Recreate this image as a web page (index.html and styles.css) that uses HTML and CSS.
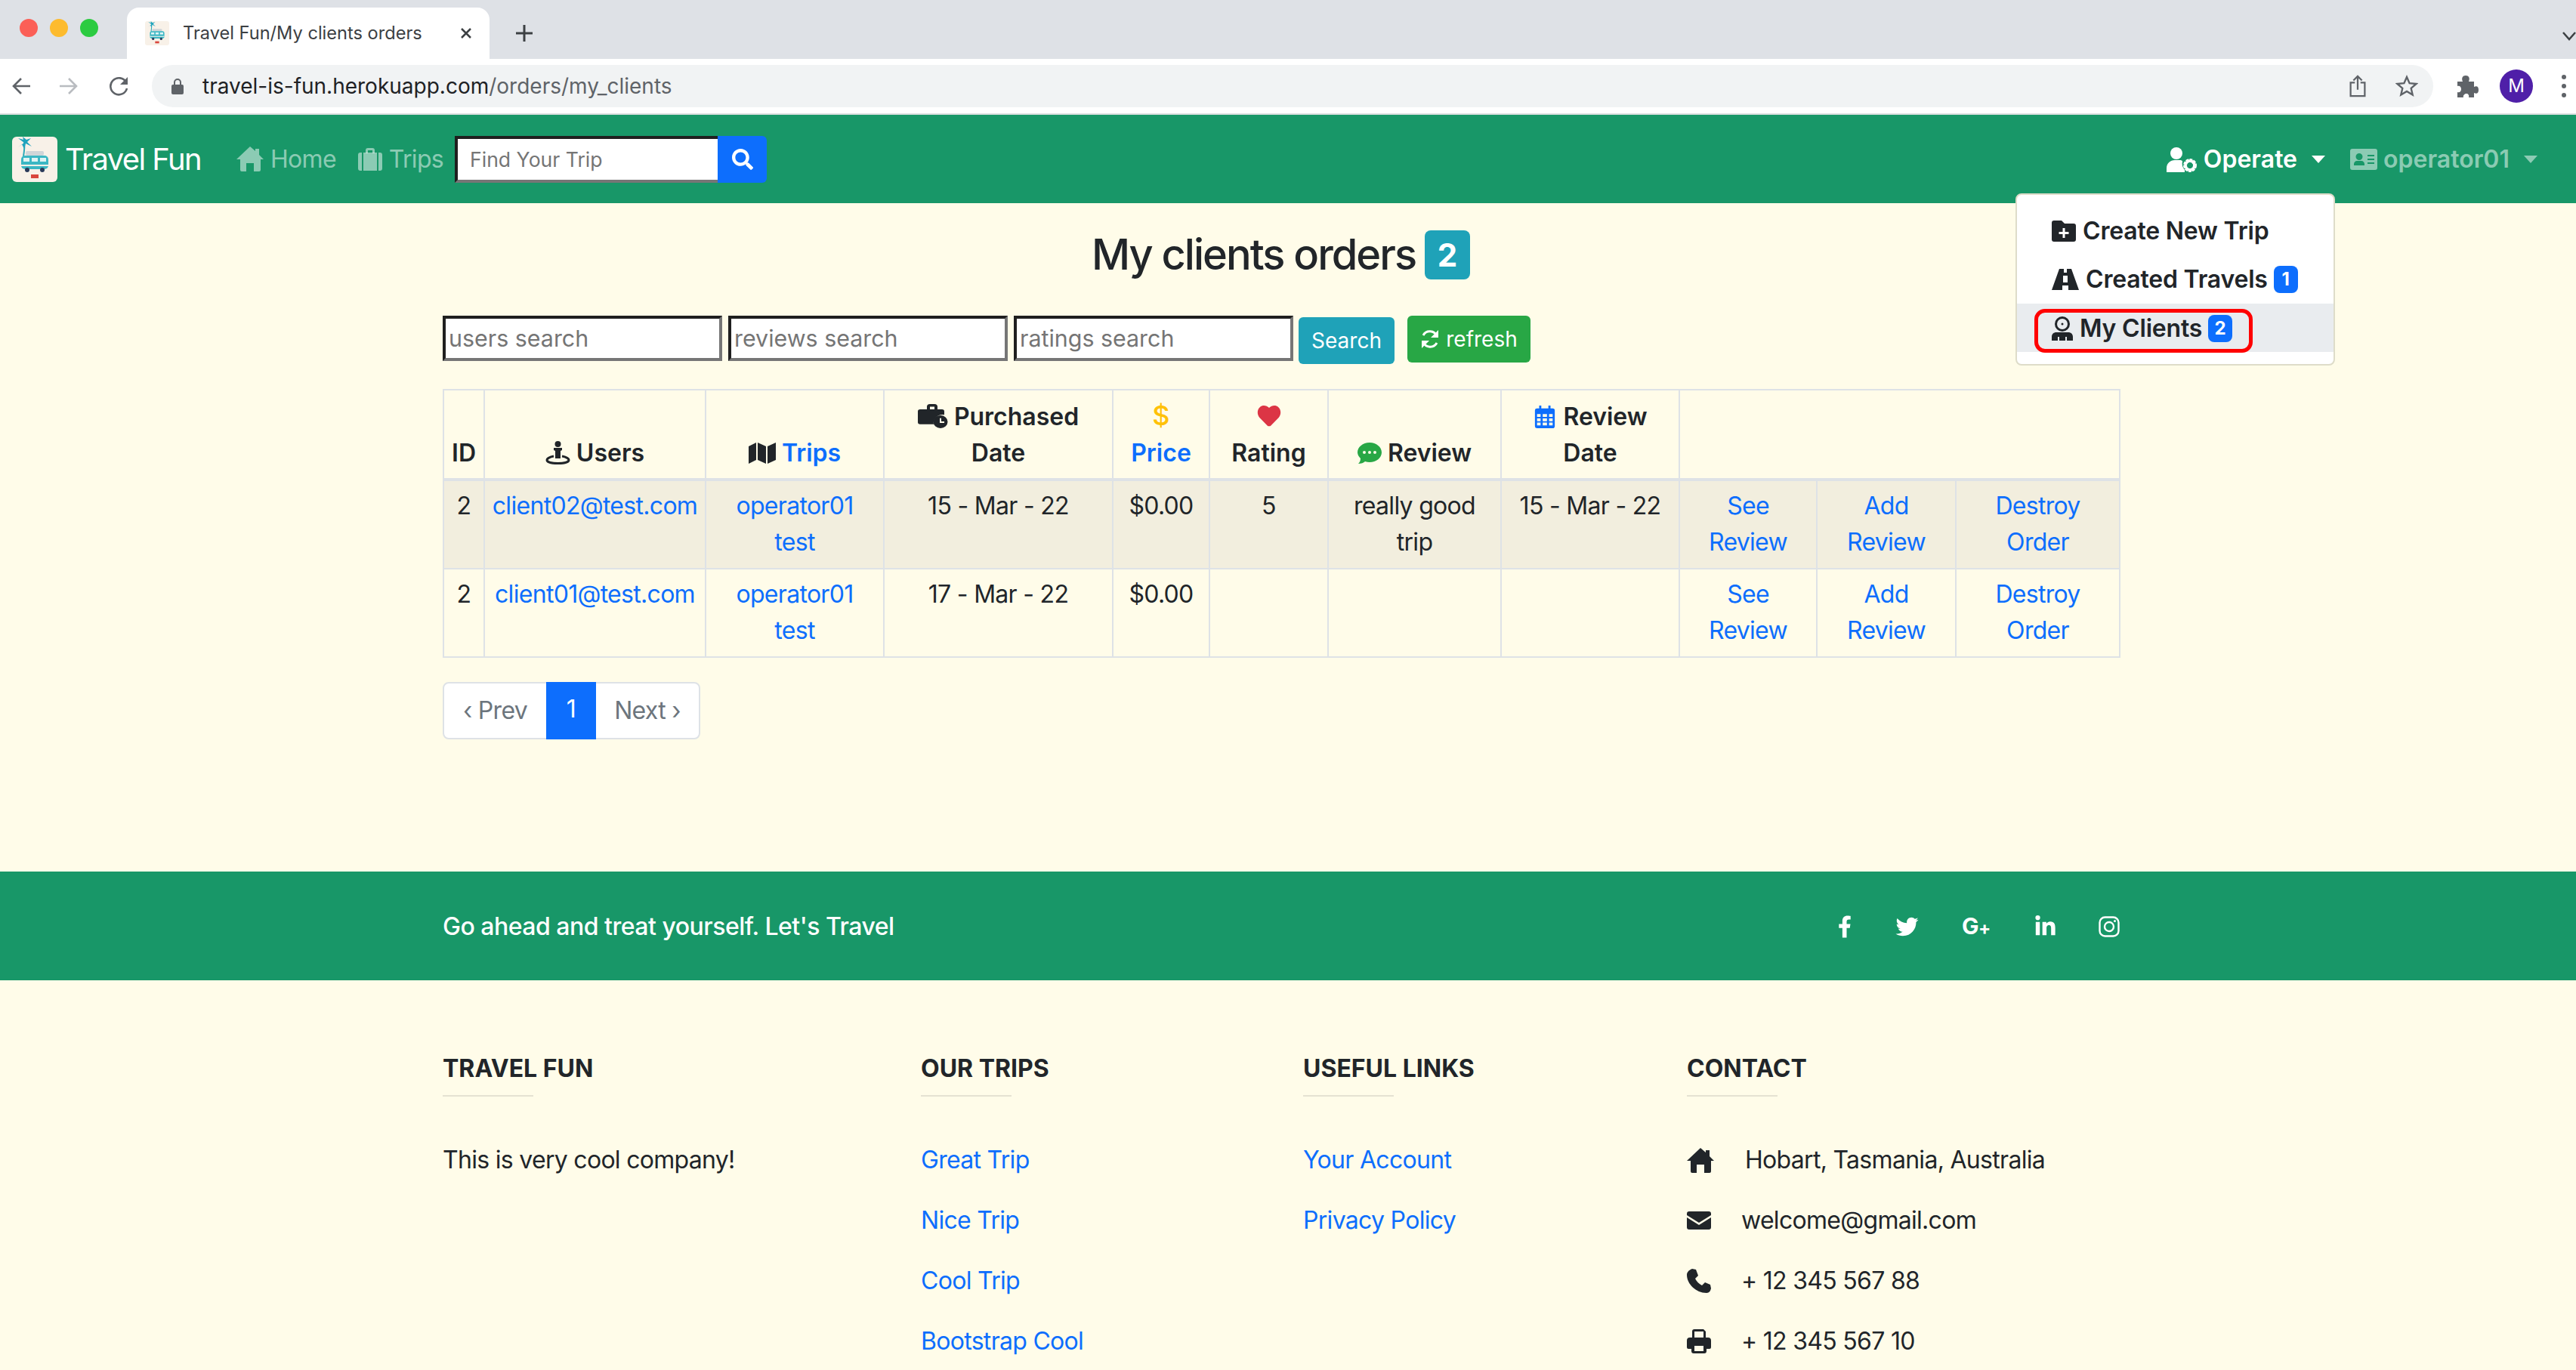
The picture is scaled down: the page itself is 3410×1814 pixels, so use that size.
FILE: index.html
```html
<!DOCTYPE html>
<html lang="en">
<head>
  <meta charset="UTF-8">
  <title>Travel Fun/My clients orders</title>
  <link rel="stylesheet" href="styles.css">
</head>
<body>
  <svg class="defs" width="0" height="0">
    <symbol id="logo" viewBox="0 0 60 60">
      <rect width="60" height="60" rx="6" fill="#f8f1e8"/>
      <path d="M15 26 Q17 14 16 7" stroke="#2aa9b8" stroke-width="2" fill="none"/>
      <path d="M16 8 L8 2 L15 4 L14 0 L19 4 L25 2 L20 7 L26 13 L18 9 L16 16 L13 10 L8 14Z" fill="#1fa3bd"/>
      <rect x="18" y="19" width="24" height="6" rx="2" fill="#cfd5d8"/>
      <rect x="12" y="25" width="36" height="18" rx="5" fill="#3bb7c4"/>
      <rect x="15" y="28" width="8" height="5" fill="#dff4f4"/><rect x="26" y="28" width="8" height="5" fill="#dff4f4"/><rect x="37" y="28" width="8" height="5" fill="#dff4f4"/>
      <rect x="12" y="37" width="36" height="2" fill="#f8f1e8"/>
      <circle cx="20" cy="44" r="3" fill="#2a3a5a"/><circle cx="40" cy="44" r="3" fill="#2a3a5a"/>
      <rect x="25" y="50" width="10" height="5" fill="#d9463d"/>
    </symbol>
    <symbol id="home" viewBox="0 0 36 33"><path d="M18 0l7 6V3h5v8l6 6h-4v14a2 2 0 0 1-2 2h-7V22h-10v11H7a2 2 0 0 1-2-2V17H0z"/></symbol>
    <symbol id="search" viewBox="0 0 512 512"><path d="M505 442.7L405.3 343c-4.5-4.5-10.6-7-17-7H372c27.6-35.3 44-79.7 44-128C416 93.1 322.9 0 208 0S0 93.1 0 208s93.1 208 208 208c48.3 0 92.7-16.4 128-44v16.3c0 6.4 2.5 12.5 7 17l99.7 99.7c9.4 9.4 24.6 9.4 33.9 0l28.3-28.3c9.4-9.4 9.4-24.6.1-34zM208 336c-70.7 0-128-57.2-128-128 0-70.7 57.2-128 128-128 70.7 0 128 57.2 128 128 0 70.7-57.2 128-128 128z"/></symbol>
    <symbol id="suitcase" viewBox="0 0 32 30"><path d="M10 7V3a3 3 0 0 1 3-3h6a3 3 0 0 1 3 3v4h-3V3h-6v4z"/><path d="M0 9a3 3 0 0 1 3-3h2v24H3a3 3 0 0 1-3-3zM7 6h18v24H7zM27 6h2a3 3 0 0 1 3 3v18a3 3 0 0 1-3 3h-2z"/></symbol>
    <symbol id="facebook" viewBox="0 0 320 512"><path d="M279.14 288l14.22-92.66h-88.91v-60.13c0-25.35 12.42-50.06 52.24-50.06h40.42V6.26S260.43 0 225.36 0c-73.22 0-121.08 44.38-121.08 124.72v70.62H22.89V288h81.39v224h100.17V288z"/></symbol>
    <symbol id="twitter" viewBox="0 0 512 512"><path d="M459.37 151.716c.325 4.548.325 9.097.325 13.645 0 138.72-105.583 298.558-298.558 298.558-59.452 0-114.68-17.219-161.137-47.106 8.447.974 16.568 1.299 25.34 1.299 49.055 0 94.213-16.568 130.274-44.832-46.132-.975-84.792-31.188-98.112-72.772 6.498.974 12.995 1.624 19.818 1.624 9.421 0 18.843-1.3 27.614-3.573-48.081-9.747-84.143-51.98-84.143-102.985v-1.299c13.969 7.797 30.214 12.67 47.431 13.319-28.264-18.843-46.781-51.005-46.781-87.391 0-19.492 5.197-37.36 14.294-52.954 51.655 63.675 129.3 105.258 216.365 109.807-1.624-7.797-2.599-15.918-2.599-24.04 0-57.828 46.782-104.934 104.934-104.934 30.213 0 57.502 12.67 76.67 33.137 23.715-4.548 46.456-13.32 66.599-25.34-7.798 24.366-24.366 44.833-46.132 57.827 21.117-2.273 41.584-8.122 60.426-16.243-14.292 20.791-32.161 39.308-52.628 54.253z"/></symbol>
    <symbol id="linkedin" viewBox="0 0 448 512"><path d="M100.28 448H7.4V148.9h92.88zM53.79 108.1C24.09 108.1 0 83.5 0 53.8a53.79 53.79 0 0 1 107.58 0c0 29.7-24.1 54.3-53.79 54.3zM447.9 448h-92.68V302.4c0-34.7-.7-79.2-48.29-79.2-48.29 0-55.69 37.7-55.69 76.7V448h-92.78V148.9h89.08v40.8h1.3c12.4-23.5 42.69-48.3 87.88-48.3 94 0 111.28 61.9 111.28 142.3V448z"/></symbol>
  </svg>

  <header class="chrome">
    <div class="tabstrip">
      <div class="lights"><i class="light red"></i><i class="light amber"></i><i class="light green"></i></div>
      <div class="tab">
        <svg class="favicon"><use href="#logo"/></svg>
        <span class="tab-title">Travel Fun/My clients orders</span>
        <svg class="tab-x" viewBox="0 0 16 16"><path d="M2 2l12 12M14 2L2 14"/></svg>
      </div>
      <svg class="tab-plus" viewBox="0 0 24 24"><path d="M12 1v22M1 12h22"/></svg>
      <svg class="tab-chevron" viewBox="0 0 18 12"><path d="M1 1l8 9 8-9"/></svg>
    </div>
    <div class="toolbar">
      <svg class="tool-icon" viewBox="0 0 26 26"><path d="M25 13H3M13 3L3 13l10 10"/></svg>
      <svg class="tool-icon off" viewBox="0 0 26 26"><path d="M1 13h22M13 3l10 10-10 10"/></svg>
      <svg class="tool-icon reload" viewBox="0 0 26 26"><path d="M22 8a11 11 0 1 0 1 8"/><path class="solid" d="M24 1v10H14z"/></svg>
      <div class="omnibox">
        <svg class="lock" viewBox="0 0 16 22"><path d="M3 9V6a5 5 0 0 1 10 0v3h-2V6a3 3 0 0 0-6 0v3z"/><rect y="9" width="16" height="13" rx="2"/></svg>
        <span class="url">travel-is-fun.herokuapp.com<span class="url-path">/orders/my_clients</span></span>
        <svg class="omni-icon share" viewBox="0 0 24 32"><path d="M8 11H2v19h20V11h-6M12 21V2M6 8l6-6 6 6"/></svg>
        <svg class="omni-icon star" viewBox="0 0 30 30"><path d="M15 3l3.6 8.2 8.9.8-6.8 5.9 2 8.7-7.7-4.6-7.7 4.6 2-8.7L2.500 12l8.900-.8z"/></svg>
      </div>
      <svg class="puzzle" viewBox="0 0 30 30"><path d="M2 9h7c-2-5 0-8 4-8s6 3 4 8h7v7c4-2 6 0 6 4s-2 6-6 4v6h-7c1-3-1-5-3-5s-5 2-4 5H2v-7c3 1 5-1 5-4s-2-5-5-4z"/></svg>
      <div class="avatar">M</div>
      <div class="kebab"><i></i><i></i><i></i></div>
    </div>
  </header>

  <nav class="navbar">
    <a class="brand"><svg class="brand-logo"><use href="#logo"/></svg>Travel Fun</a>
    <a class="nav-link home-link"><svg class="nav-icon home-icon"><use href="#home"/></svg>Home</a>
    <a class="nav-link trips-link"><svg class="nav-icon trips-icon"><use href="#suitcase"/></svg>Trips</a>
    <form class="nav-search">
      <input class="nav-input" type="text" placeholder="Find Your Trip">
      <button class="nav-btn" type="button"><svg class="nav-btn-icon"><use href="#search"/></svg></button>
    </form>
    <div class="nav-right">
      <a class="nav-link active">
        <svg class="nav-icon operate-icon" viewBox="0 0 40 34"><circle cx="13" cy="9" r="8"/><path d="M0 34v-5c0-7 5-11 11-11h6c2 0 3 .5 4 1-1 5 0 9 3 12v3z"/><circle cx="31" cy="25" r="6.500" fill="none" stroke="currentColor" stroke-width="5" stroke-dasharray="3.200 1"/><circle cx="31" cy="25" r="6" fill="none" stroke="currentColor" stroke-width="3.500"/></svg>
        Operate<i class="caret"></i>
      </a>
      <a class="nav-link user-link">
        <svg class="nav-icon card-icon" viewBox="0 0 36 28"><path fill-rule="evenodd" d="M3 0h30a3 3 0 0 1 3 3v22a3 3 0 0 1-3 3H3a3 3 0 0 1-3-3V3a3 3 0 0 1 3-3zM12 6a4.500 4.500 0 1 0 0 9 4.500 4.500 0 0 0 0-9zM5 22h14v-2c0-2-2-4-4-4H9c-2 0-4 2-4 4zM23 8v2h9V8zM23 13v2h9v-2zM23 18v2h9v-2z"/></svg>
        operator01<i class="caret"></i>
      </a>
    </div>
    <div class="dropdown">
      <a class="drop-item">
        <svg class="drop-icon folder" viewBox="0 0 32 28"><path fill-rule="evenodd" d="M3 0h10l4 4h12a3 3 0 0 1 3 3v18a3 3 0 0 1-3 3H3a3 3 0 0 1-3-3V3a3 3 0 0 1 3-3zM14.500 10v5h-5v3h5v5h3v-5h5v-3h-5v-5z"/></svg>
        Create New Trip
      </a>
      <a class="drop-item">
        <svg class="drop-icon road" viewBox="0 0 36 28"><path fill-rule="evenodd" d="M10 0h6v5h4V0h6l10 28H22v-6h-8v6H0zM15 9v9h6V9z"/></svg>
        Created Travels<span class="pill">1</span>
      </a>
      <a class="drop-item current">
        <span class="marked">
          <svg class="drop-icon agent" viewBox="0 0 28 32"><path fill-rule="evenodd" d="M14 0a10 10 0 1 1 0 20 10 10 0 0 1 0-20zM14 3a7 7 0 1 0 0 14 7 7 0 0 0 0-14z"/><circle cx="14" cy="10" r="1.500"/><path d="M0 32v-5c0-4 3-6 6-6h16c3 0 6 2 6 6v5h-8v-5h-2v5h-8v-5H8v5z"/></svg>
          My Clients<span class="pill">2</span>
        </span>
      </a>
    </div>
  </nav>

  <main class="content">
    <h3 class="page-title">My clients orders<span class="title-badge">2</span></h3>
    <form class="filters">
      <input class="filter-input" type="text" placeholder="users search">
      <input class="filter-input" type="text" placeholder="reviews search">
      <input class="filter-input" type="text" placeholder="ratings search">
      <button class="btn btn-search" type="button">Search</button>
      <button class="btn btn-refresh" type="button">
        <svg class="refresh-icon" viewBox="0 0 26 26"><path d="M22 9A10 10 0 0 0 4 8M4 17a10 10 0 0 0 18 1"/><path class="solid" d="M24 1v10H14zM2 25V15h10z"/></svg>
        refresh
      </button>
    </form>

    <table class="orders">
      <colgroup>
        <col class="c-id"><col class="c-user"><col class="c-trip"><col class="c-date"><col class="c-price"><col class="c-rating"><col class="c-review"><col class="c-rdate"><col class="c-see"><col class="c-add"><col class="c-del">
      </colgroup>
      <thead>
        <tr>
          <th>ID</th>
          <th><svg class="th-icon pin" viewBox="0 0 33 31"><circle cx="16.500" cy="4" r="4"/><path d="M11 9h11v3l-2 1v10h-7V13l-2-1z"/><path class="ring" d="M11 20c-5 1-9 3-9 5 0 3 7 4.500 14.500 4.500S31 28 31 25c0-2-4-4-9-5"/></svg> Users</th>
          <th><svg class="th-icon map" viewBox="0 0 36 28"><path d="M0 5l10-5v23L0 28zM12 0l11 5v23l-11-5zM25 5l11-5v23l-11 5z"/></svg> <a class="sort">Trips</a></th>
          <th><svg class="th-icon case" preserveAspectRatio="none" viewBox="0 0 40 36"><path fill-rule="evenodd" d="M12 8V4a4 4 0 0 1 4-4h6a4 4 0 0 1 4 4v4h6a3 3 0 0 1 3 3v5a12 12 0 0 0-14 14H3a3 3 0 0 1-3-3V11a3 3 0 0 1 3-3zM16 4v4h6V4z"/><path fill-rule="evenodd" d="M30 17a9.500 9.500 0 1 1 0 19 9.500 9.500 0 0 1 0-19zM29 21v7h6v-2h-4v-5z"/></svg> Purchased<br>Date</th>
          <th><span class="dollar">$</span><br><a class="sort">Price</a></th>
          <th><svg class="th-icon heart" viewBox="0 0 512 512"><path d="M462 32c-58-49-147-41-206 19-59-60-148-68-206-19C-25 96-14 217 40 272l175 179c10 10 23 16 41 16s31-6 41-16l175-179c54-55 65-176-10-240z"/></svg><br>Rating</th>
          <th><svg class="th-icon bubble" viewBox="0 0 32 30"><path fill-rule="evenodd" d="M16 1c9 0 16 6 16 13s-7 13-16 13c-2 0-4-.3-6-1-2 2-5 3-9 3 2-2 3-4 3-7-2-2-4-5-4-8C0 7 7 1 16 1zM9 12a2 2 0 1 0 0 4 2 2 0 0 0 0-4zm7 0a2 2 0 1 0 0 4 2 2 0 0 0 0-4zm7 0a2 2 0 1 0 0 4 2 2 0 0 0 0-4z"/></svg> Review</th>
          <th><svg class="th-icon cal" viewBox="0 0 28 32"><path fill-rule="evenodd" d="M6 0h3v4h10V0h3v4h3a3 3 0 0 1 3 3v22a3 3 0 0 1-3 3H3a3 3 0 0 1-3-3V7a3 3 0 0 1 3-3h3zM3 12v4h5v-4zm8 0v4h6v-4zm9 0v4h5v-4zM3 18v4h5v-4zm8 0v4h6v-4zm9 0v4h5v-4zM3 24v4h5v-4zm8 0v4h6v-4zm9 0v4h5v-4z"/></svg> Review<br>Date</th>
          <th colspan="3"></th>
        </tr>
      </thead>
      <tbody>
        <tr class="striped">
          <td>2</td>
          <td><a>client02@test.com</a></td>
          <td><a>operator01<br>test</a></td>
          <td>15 - Mar - 22</td>
          <td>$0.00</td>
          <td>5</td>
          <td>really good trip</td>
          <td>15 - Mar - 22</td>
          <td><a>See Review</a></td>
          <td><a>Add Review</a></td>
          <td><a>Destroy Order</a></td>
        </tr>
        <tr>
          <td>2</td>
          <td><a>client01@test.com</a></td>
          <td><a>operator01<br>test</a></td>
          <td>17 - Mar - 22</td>
          <td>$0.00</td>
          <td></td>
          <td></td>
          <td></td>
          <td><a>See Review</a></td>
          <td><a>Add Review</a></td>
          <td><a>Destroy Order</a></td>
        </tr>
      </tbody>
    </table>

    <div class="pagination">
      <a class="page prev">‹ Prev</a>
      <a class="page on">1</a>
      <a class="page next">Next ›</a>
    </div>
  </main>

  <footer class="footer">
    <div class="social-bar">
      <span class="social-text">Go ahead and treat yourself. Let's Travel</span>
      <div class="socials">
        <svg class="soc soc-f"><use href="#facebook"/></svg>
        <svg class="soc soc-t"><use href="#twitter"/></svg>
        <span class="soc-g">G<small>+</small></span>
        <svg class="soc soc-in"><use href="#linkedin"/></svg>
        <svg class="soc-ig" viewBox="0 0 28 28"><rect x="1.500" y="1.500" width="25" height="25" rx="7"/><circle cx="14" cy="14" r="6"/><circle class="dot" cx="21.500" cy="6.500" r="1.500"/></svg>
      </div>
    </div>
    <div class="foot-cols">
      <section class="foot-col first">
        <h6>TRAVEL FUN</h6>
        <p>This is very cool company!</p>
      </section>
      <section class="foot-col second">
        <h6>OUR TRIPS</h6>
        <p><a>Great Trip</a></p>
        <p><a>Nice Trip</a></p>
        <p><a>Cool Trip</a></p>
        <p><a>Bootstrap Cool</a></p>
      </section>
      <section class="foot-col third">
        <h6>USEFUL LINKS</h6>
        <p><a>Your Account</a></p>
        <p><a>Privacy Policy</a></p>
      </section>
      <section class="foot-col fourth">
        <h6>CONTACT</h6>
        <p class="contact wide"><svg class="c-icon c-home"><use href="#home"/></svg>Hobart, Tasmania, Australia</p>
        <p class="contact"><svg class="c-icon" viewBox="0 0 32 24"><path d="M3 0h26a3 3 0 0 1 3 3v2L16 15 0 5V3a3 3 0 0 1 3-3z"/><path d="M0 8l16 10L32 8v13a3 3 0 0 1-3 3H3a3 3 0 0 1-3-3z"/></svg>welcome@gmail.com</p>
        <p class="contact"><svg class="c-icon" viewBox="0 0 32 32"><path d="M7 0l5 1 3 8-4 4c2 4 5 7 9 9l4-4 7 3 1 5-1 3c-1 2-3 3-5 3C12 32 0 20 0 8c0-3 2-6 7-8z"/></svg>+ 12 345 567 88</p>
        <p class="contact"><svg class="c-icon" viewBox="0 0 32 32"><path fill-rule="evenodd" d="M7 3a3 3 0 0 1 3-3h12l3 3v8h3a4 4 0 0 1 4 4v9a2 2 0 0 1-2 2h-4v3a3 3 0 0 1-3 3H9a3 3 0 0 1-3-3v-3H2a2 2 0 0 1-2-2v-9a4 4 0 0 1 4-4h3zM10 3v8h12V3zM10 22v7h12v-7z"/></svg>+ 12 345 567 10</p>
      </section>
    </div>
  </footer>
</body>
</html>
```

FILE: styles.css
```css
html, body {
  margin: 0;
  height: 1814px;
  overflow: hidden;
}

body {
  font-family: "Inter", "Liberation Sans", sans-serif;
  font-size: 32px;
  line-height: 48px;
  letter-spacing: -.7px;
  color: #212529;
  background-color: #fffce9;
}

a {
  color: #0d6efd;
  text-decoration: none;
}

.defs {
  display: block;
  height: 0;
}

/* browser window */
.chrome {
  height: 152px;
  background-color: #fff;
  border-bottom: 2px solid #dcdfe0;
  box-sizing: border-box;
  letter-spacing: 0;
}

.tabstrip {
  display: flex;
  align-items: flex-end;
  height: 78px;
  background-color: #dee1e6;
  position: relative;
}

.lights {
  display: flex;
  gap: 16px;
  align-self: flex-start;
  margin: 25px 40px 0 26px;
}

.light {
  display: block;
  width: 24px;
  height: 24px;
  border-radius: 50%;
}

.red { background-color: #fb5f57; }
.amber { background-color: #fdbb2e; }
.green { background-color: #2ccb41; }

.tab {
  display: flex;
  align-items: center;
  width: 480px;
  height: 68px;
  background-color: #fff;
  border-radius: 16px 16px 0 0;
  margin-left: -2px;
}

.favicon {
  width: 32px;
  height: 32px;
  margin-left: 24px;
}

.tab-title {
  margin-left: 18px;
  font-size: 23.6px;
  color: #3c4043;
  white-space: nowrap;
}

.tab-x {
  width: 16px;
  height: 16px;
  margin-left: 50px;
  fill: none;
  stroke: #3c4043;
  stroke-width: 2.5;
}

.tab-plus {
  width: 24px;
  height: 24px;
  margin: 0 0 22px 34px;
  fill: none;
  stroke: #3c4043;
  stroke-width: 3;
}

.tab-chevron {
  width: 18px;
  height: 12px;
  margin: 0 0 24px auto;
  fill: none;
  stroke: #3c4043;
  stroke-width: 2.500;
}

.toolbar {
  display: flex;
  align-items: center;
  height: 72px;
}

.tool-icon {
  width: 26px;
  height: 26px;
  margin-left: 15px;
  margin-right: 22px;
  fill: none;
  stroke: #5f6368;
  stroke-width: 2.6;
}

.tool-icon.off {
  stroke: #b9bcc0;
}

.tool-icon.reload {
  margin-left: 19px;
}

.solid {
  fill: #5f6368;
  stroke: none;
}

.omnibox {
  display: flex;
  align-items: center;
  width: 3020px;
  height: 56px;
  margin-left: 8px;
  background-color: #f1f3f4;
  border-radius: 28px;
}

.lock {
  width: 16px;
  height: 22px;
  margin-left: 26px;
  fill: #5f6368;
}

.url {
  margin-left: 25px;
  font-size: 28px;
  line-height: 56px;
  color: #202124;
  white-space: nowrap;
}

.url-path {
  color: #5f6368;
}

.omni-icon {
  fill: none;
  stroke: #5f6368;
  stroke-width: 2.4;
}

.share {
  width: 24px;
  height: 30px;
  margin-left: auto;
}

.star {
  width: 30px;
  height: 30px;
  margin: 0 20px 0 38px;
}

.puzzle {
  width: 30px;
  height: 30px;
  margin-left: 30px;
  fill: #5f6368;
}

.avatar {
  width: 44px;
  height: 44px;
  margin-left: 28px;
  border-radius: 50%;
  background-color: #4f1fa8;
  color: #fff;
  font-size: 24px;
  line-height: 44px;
  text-align: center;
}

.kebab {
  display: flex;
  flex-direction: column;
  gap: 6px;
  margin-left: 38px;
}

.kebab i {
  display: block;
  width: 6px;
  height: 6px;
  border-radius: 50%;
  background-color: #5f6368;
}

/* site nav */
.navbar {
  display: flex;
  align-items: center;
  height: 117px;
  padding-left: 16px;
  background-color: #189768;
  position: relative;
}

.brand {
  display: flex;
  align-items: center;
  color: #fff;
  font-size: 40px;
  letter-spacing: -1.6px;
  white-space: nowrap;
}

.brand-logo {
  width: 60px;
  height: 60px;
  margin-right: 10px;
}

.nav-link {
  display: flex;
  align-items: center;
  color: rgba(255, 255, 255, .5);
  white-space: nowrap;
}

.nav-link.active {
  color: #fff;
  font-weight: 600;
  letter-spacing: 0;
}

.nav-icon {
  fill: currentColor;
}

.home-link {
  margin-left: 47px;
}

.home-icon {
  width: 36px;
  height: 33px;
  margin-right: 9px;
}

.trips-link {
  margin-left: 29px;
}

.trips-icon {
  width: 32px;
  height: 30px;
  margin-right: 9px;
}

.nav-search {
  display: flex;
  margin-left: 15px;
}

.nav-input {
  width: 348px;
  height: 62px;
  box-sizing: border-box;
  padding: 0 16px;
  border-width: 4px 0 4px 4px;
  border-style: solid;
  border-color: #1f1f1f #1f1f1f #767676;
  font: 26.6px "Inter", sans-serif;
  background-color: #fff;
}

.nav-btn {
  display: flex;
  align-items: center;
  justify-content: center;
  width: 65px;
  height: 62px;
  border: 0;
  padding: 0;
  border-radius: 0 6px 6px 0;
  background-color: #0d6efd;
}

.nav-btn-icon {
  width: 28px;
  height: 28px;
  fill: #fff;
}

.nav-right {
  display: flex;
  margin-left: auto;
  padding-right: 51px;
}

.operate-icon {
  width: 40px;
  height: 34px;
  margin-right: 9px;
}

.card-icon {
  width: 36px;
  height: 28px;
  margin-right: 8px;
}

.user-link {
  margin-left: 33px;
  font-weight: 600;
  letter-spacing: 0;
}

.caret {
  display: block;
  width: 0;
  height: 0;
  margin-left: 19px;
  border-top: 10px solid currentColor;
  border-left: 9px solid transparent;
  border-right: 9px solid transparent;
}

/* dropdown hangs over the page */
.dropdown {
  position: absolute;
  top: 104px;
  left: 2668px;
  z-index: 5;
  width: 423px;
  box-sizing: border-box;
  padding: 16px 0;
  background-color: #fff;
  border: 2px solid #dedcc9;
  border-radius: 8px;
  letter-spacing: -.2px;
}

.drop-item {
  display: flex;
  align-items: center;
  height: 64px;
  padding-left: 46px;
  color: #212529;
  font-weight: 600;
  white-space: nowrap;
}

.drop-icon {
  height: 28px;
  fill: #212529;
  flex: none;
}

.folder {
  width: 32px;
  margin-right: 9px;
}

.road {
  width: 36px;
  margin-right: 9px;
}

.agent {
  width: 28px;
  height: 32px;
  margin-right: 9px;
}

.drop-item.current {
  padding-left: 23px;
  background-color: #e9ecef;
}

.marked {
  display: flex;
  align-items: center;
  width: 289px;
  height: 58px;
  box-sizing: border-box;
  margin-top: 8px;
  padding-left: 18px;
  padding-bottom: 6px;
  border: 5px solid #f00;
  border-radius: 14px;
  background-color: #e9ecef;
}

.pill {
  display: inline-block;
  width: 32px;
  height: 36px;
  margin-left: 8px;
  border-radius: 8px;
  background-color: #0d6efd;
  color: #fff;
  font-size: 24px;
  font-weight: 700;
  line-height: 36px;
  letter-spacing: 0;
  text-align: center;
}

/* main area */
.content {
  height: 885px;
  box-sizing: border-box;
  padding: 0 0 0 586px;
}

.page-title {
  display: flex;
  align-items: center;
  justify-content: center;
  width: 2219px;
  height: 65px;
  margin: 0;
  padding-top: 36px;
  font-size: 56px;
  font-weight: 500;
  line-height: 65px;
  letter-spacing: -2px;
  white-space: nowrap;
}

.title-badge {
  display: inline-block;
  width: 60px;
  height: 65px;
  margin-left: 12px;
  border-radius: 8px;
  background-color: #1fa2b8;
  color: #fff;
  font-size: 42px;
  font-weight: 700;
  line-height: 65px;
  letter-spacing: 0;
  text-align: center;
}

.filters {
  display: flex;
  align-items: flex-start;
  height: 97px;
  padding-top: 48px;
}

.filter-input {
  width: 370px;
  height: 60px;
  box-sizing: border-box;
  margin-right: 8px;
  padding: 0 4px;
  border-width: 4px;
  border-style: solid;
  border-color: #1f1f1f #767676 #767676 #1f1f1f;
  background-color: #fff;
  font: 30.4px "Inter", sans-serif;
}

.btn {
  height: 62px;
  box-sizing: border-box;
  border: 0;
  border-radius: 6px;
  color: #fff;
  font: 28px "Inter", sans-serif;
  white-space: nowrap;
}

.btn-search {
  width: 127px;
  margin: 2px 0 0 -1px;
  background-color: #1fa2b8;
}

.btn-refresh {
  display: flex;
  align-items: center;
  justify-content: center;
  width: 163px;
  margin-left: 17px;
  background-color: #28a745;
}

.refresh-icon {
  width: 26px;
  height: 26px;
  margin-right: 8px;
  fill: none;
  stroke: #fff;
  stroke-width: 3;
}

.refresh-icon .solid {
  fill: #fff;
}

.orders {
  width: 2219px;
  table-layout: fixed;
  border-collapse: collapse;
  text-align: center;
}

.c-id { width: 54px; }
.c-user { width: 293px; }
.c-trip { width: 236px; }
.c-date { width: 303px; }
.c-price { width: 128px; }
.c-rating { width: 157px; }
.c-review { width: 229px; }
.c-rdate { width: 236px; }
.c-see { width: 182px; }
.c-add { width: 184px; }
.c-del { width: 217px; }

.orders th,
.orders td {
  padding: 9px 9px 10px;
  border: 2px solid #dee2e6;
}

.orders td {
  vertical-align: top;
}

.orders th {
  vertical-align: bottom;
  font-weight: 600;
  letter-spacing: 0;
  border-bottom-width: 4px;
  padding-top: 9px;
  padding-bottom: 9px;
}

.orders th:first-child,
.orders td:first-child {
  padding-left: 0;
  padding-right: 0;
}

.striped td {
  background-color: #f2eede;
}

.sort {
  font-weight: 600;
}

.th-icon {
  height: 30px;
  width: 32px;
  vertical-align: -4px;
  fill: #212529;
}

.pin {
  width: 33px;
  height: 31px;
}

.map {
  width: 36px;
  height: 28px;
  vertical-align: -3px;
}

.case {
  width: 40px;
  height: 32px;
}

.ring {
  fill: none;
  stroke: #212529;
  stroke-width: 3;
}

.dollar {
  color: #ffc107;
  font-size: 36px;
  font-weight: 500;
}

.heart {
  fill: #dc3545;
}

.bubble {
  fill: #28a745;
}

.cal {
  fill: #0d6efd;
}

.pagination {
  display: inline-flex;
  height: 76px;
  margin-top: 32px;
  box-sizing: border-box;
  background-color: #fff;
  border: 2px solid #dee2e6;
  border-radius: 8px;
  color: #6c757d;
  line-height: 72px;
}

.page {
  color: #6c757d;
  white-space: nowrap;
}

.prev {
  width: 135px;
  text-align: center;
}

.on {
  width: 66px;
  height: 76px;
  margin-top: -2px;
  background-color: #0d6efd;
  color: #fff;
  text-align: center;
}

.next {
  width: 136px;
  text-align: center;
}

/* footer */
.social-bar {
  display: flex;
  align-items: center;
  height: 144px;
  box-sizing: border-box;
  padding: 2px 604px 0 586px;
  background-color: #189768;
  color: #fff;
  font-weight: 500;
  letter-spacing: -.5px;
}

.socials {
  display: flex;
  align-items: center;
  margin-left: auto;
}

.soc {
  height: 30px;
  fill: #fff;
}

.soc-f {
  width: 18px;
}

.soc-t {
  width: 31px;
  margin-left: 58px;
}

.soc-g {
  width: 40px;
  margin-left: 57px;
  font-size: 30px;
  font-weight: 700;
  white-space: nowrap;
}

.soc-g small {
  font-size: 24px;
}

.soc-in {
  width: 29px;
  margin-left: 56px;
}

.soc-ig {
  width: 28px;
  height: 28px;
  margin-left: 56px;
  fill: none;
  stroke: #fff;
  stroke-width: 2.400;
}

.dot {
  fill: #fff;
  stroke: none;
}

.foot-cols {
  display: grid;
  grid-template-columns: 633px 506px 508px 1fr;
  padding: 93px 0 0 586px;
}

.foot-col h6 {
  position: relative;
  height: 79px;
  margin: 0 0 42px;
  font-size: 32px;
  font-weight: 700;
  line-height: 48px;
  letter-spacing: 0;
}

.foot-col h6::after {
  content: "";
  display: block;
  width: 120px;
  height: 2px;
  margin-top: 11px;
  background-color: #e5e2d2;
}

.foot-col p {
  height: 48px;
  margin: 0 0 32px;
  white-space: nowrap;
}

.contact {
  display: flex;
  align-items: center;
}

.c-icon {
  width: 32px;
  height: 32px;
  margin-right: 40px;
  fill: #212529;
}

.c-home {
  width: 36px;
  height: 33px;
  margin-right: 41px;
}
```
